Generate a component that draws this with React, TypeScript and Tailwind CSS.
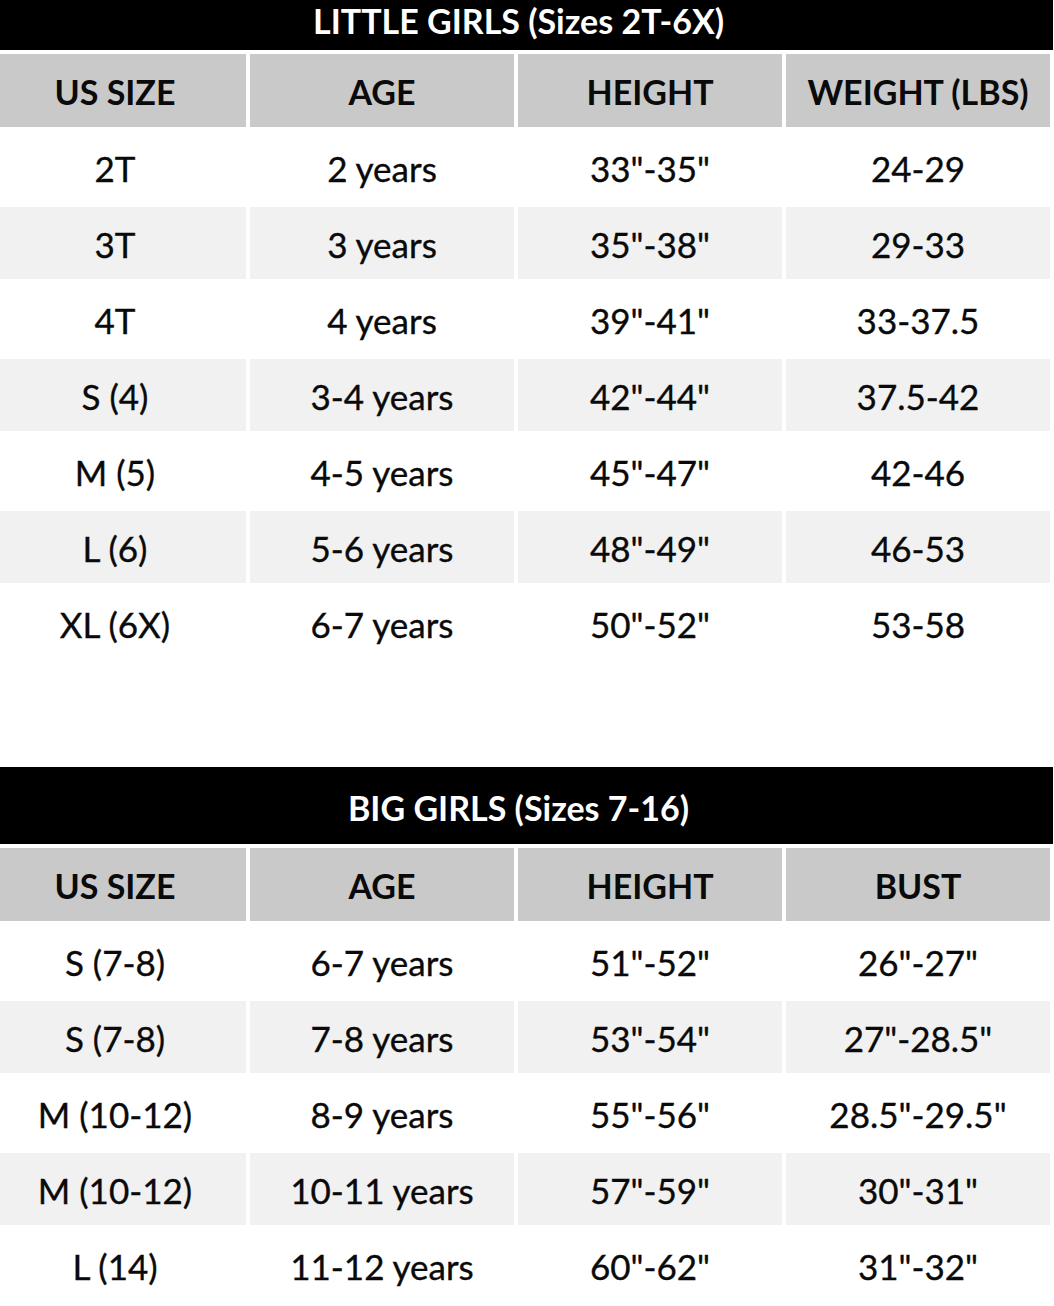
import React from "react";

type Table = {
  title: string;
  headers: string[];
  rows: string[][];
};

const little: Table = {
  title: "LITTLE GIRLS (Sizes 2T-6X)",
  headers: ["US SIZE", "AGE", "HEIGHT", "WEIGHT (LBS)"],
  rows: [
    ["2T", "2 years", '33"-35"', "24-29"],
    ["3T", "3 years", '35"-38"', "29-33"],
    ["4T", "4 years", '39"-41"', "33-37.5"],
    ["S (4)", "3-4 years", '42"-44"', "37.5-42"],
    ["M (5)", "4-5 years", '45"-47"', "42-46"],
    ["L (6)", "5-6 years", '48"-49"', "46-53"],
    ["XL (6X)", "6-7 years", '50"-52"', "53-58"],
  ],
};

const big: Table = {
  title: "BIG GIRLS (Sizes 7-16)",
  headers: ["US SIZE", "AGE", "HEIGHT", "BUST"],
  rows: [
    ["S (7-8)", "6-7 years", '51"-52"', '26"-27"'],
    ["S (7-8)", "7-8 years", '53"-54"', '27"-28.5"'],
    ["M (10-12)", "8-9 years", '55"-56"', '28.5"-29.5"'],
    ["M (10-12)", "10-11 years", '57"-59"', '30"-31"'],
    ["L (14)", "11-12 years", '60"-62"', '31"-32"'],
  ],
};

function Grid({ table }: { table: Table }) {
  return (
    <div className="flex flex-col gap-[4px] pt-[4px]">
      <div className="grid grid-cols-[262px_264px_264px_264px] gap-x-[4px] h-[73px]">
        {table.headers.map((h, i) => (
          <div
            key={i}
            className="bg-[#c9c9c9] flex items-center justify-center text-[34px] font-bold text-[#0a0a0a] pt-[2px]"
          >
            {h}
          </div>
        ))}
      </div>
      {table.rows.map((r, ri) => (
        <div
          key={ri}
          className="grid grid-cols-[262px_264px_264px_264px] gap-x-[4px] h-[72px]"
        >
          {r.map((c, ci) => (
            <div
              key={ci}
              className={
                (ri % 2 === 1 ? "bg-[#f1f1f1] " : "bg-white ") +
                "flex items-center justify-center text-[35px] text-[#0a0a0a] pt-[2px] [-webkit-text-stroke:0.35px_#0a0a0a]"
              }
            >
              {c}
            </div>
          ))}
        </div>
      ))}
    </div>
  );
}

export default function App() {
  return (
    <div
      className="w-[1054px] h-[1306px] bg-white overflow-hidden"
      style={{ fontFamily: "Lato, 'Open Sans', sans-serif" }}
    >
      <div className="-ml-4 w-[1085px]">
        <div className="w-[1069px] h-[50px] bg-black flex items-center justify-center pb-[9px] text-white font-bold text-[34px]">
          {little.title}
        </div>
        <Grid table={little} />
        <div className="h-[108px]" />
        <div className="w-[1069px] h-[77px] bg-black flex items-center justify-center pt-[4px] text-white font-bold text-[34px]">
          {big.title}
        </div>
        <Grid table={big} />
      </div>
    </div>
  );
}
